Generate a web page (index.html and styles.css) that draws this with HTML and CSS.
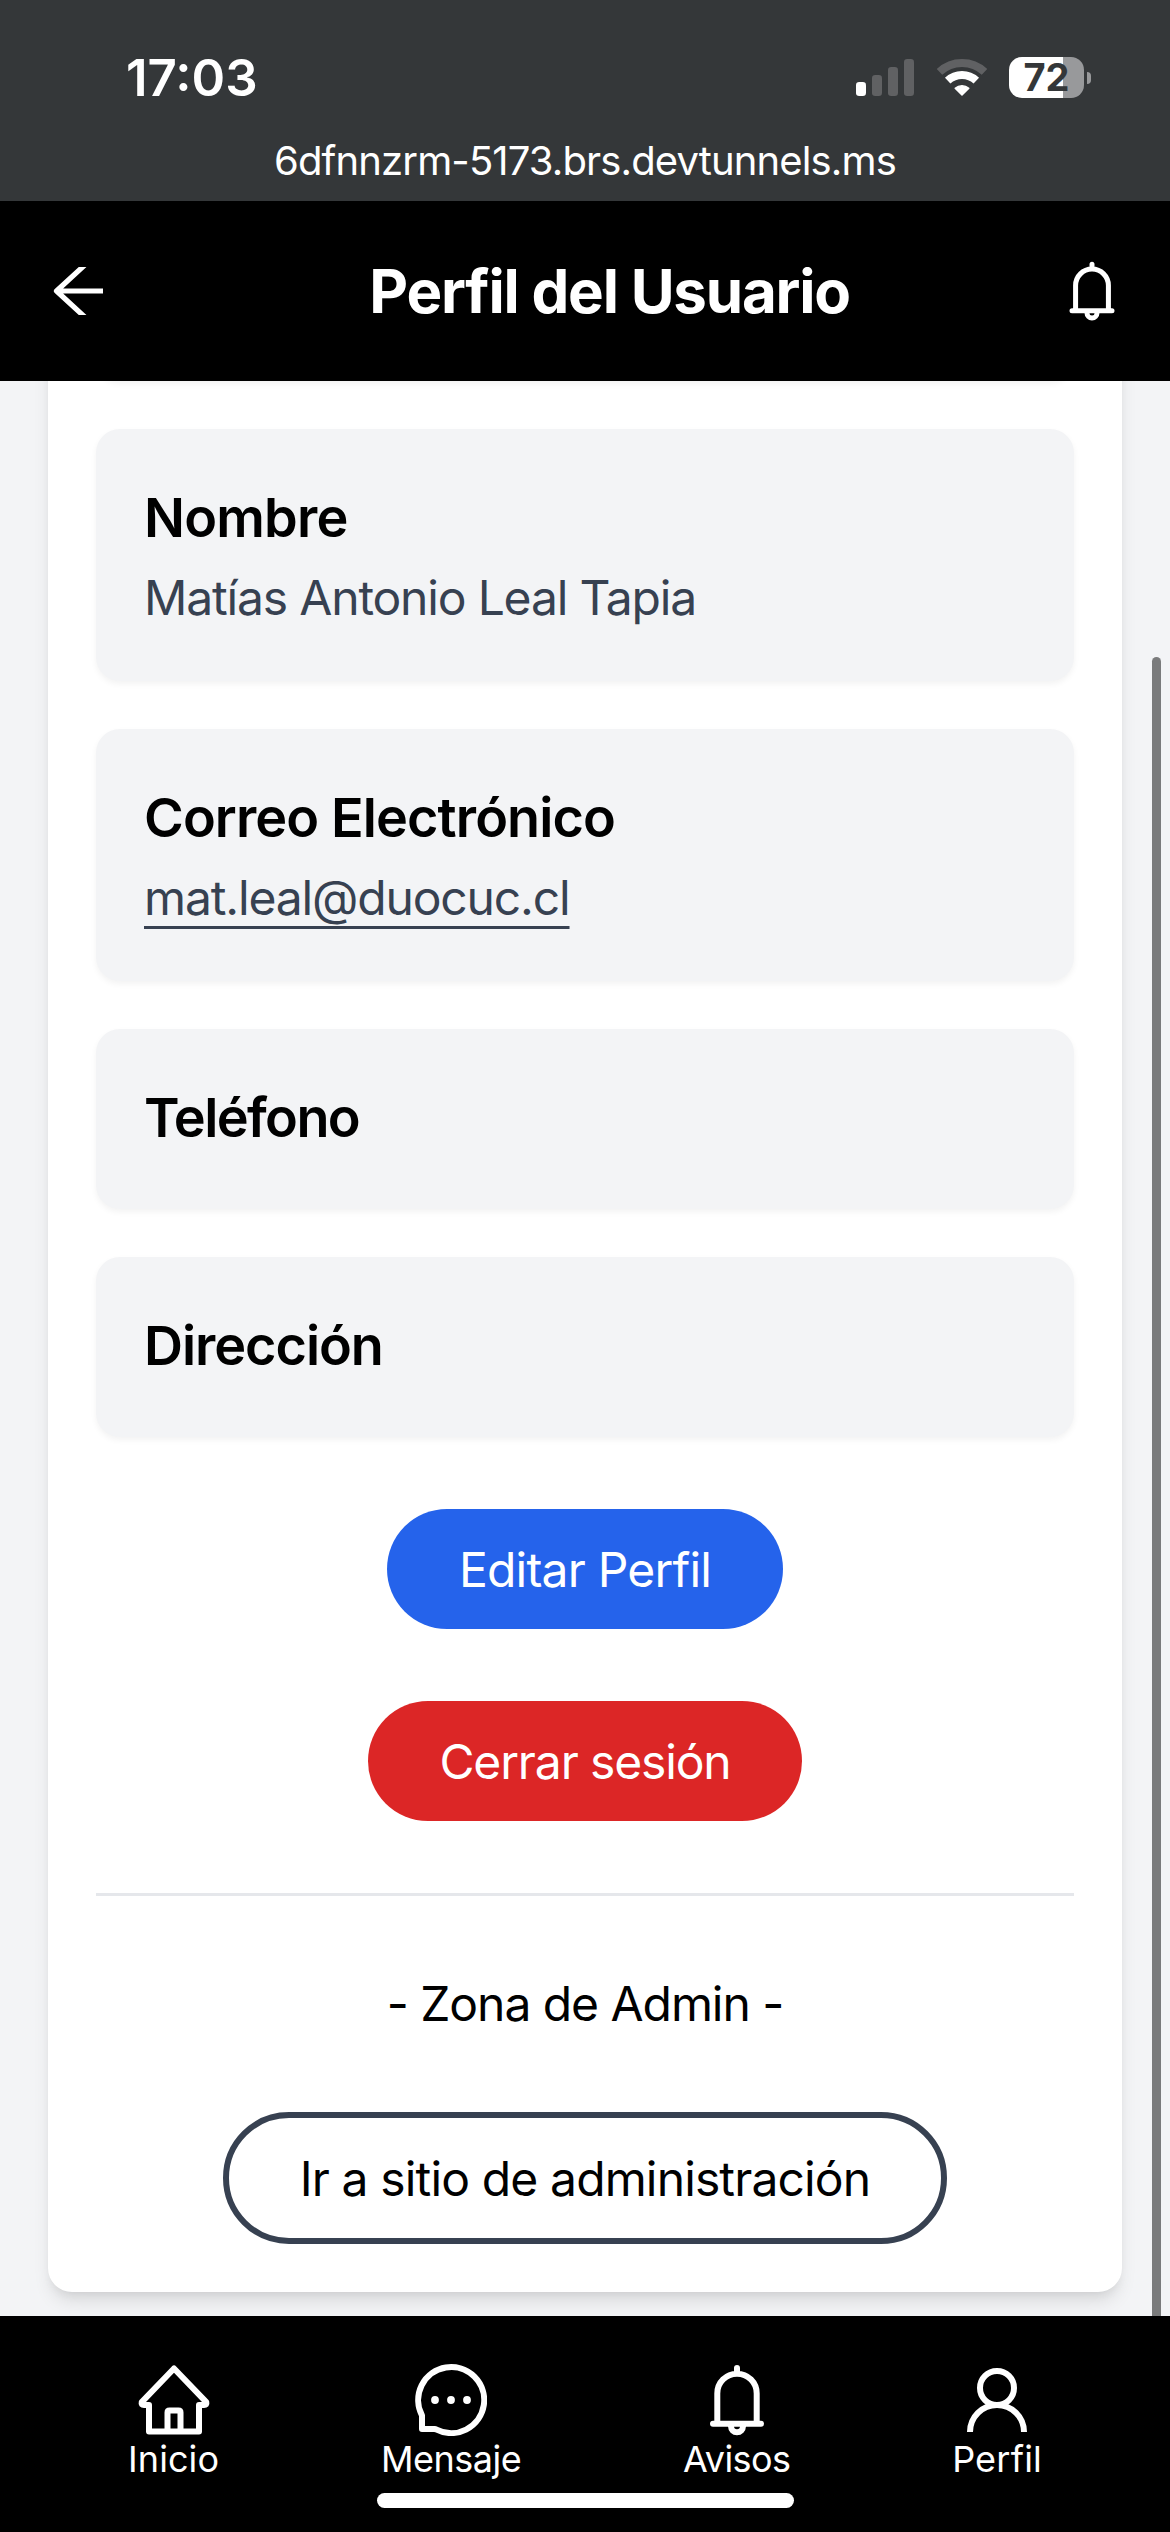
FILE: index.html
```
<!DOCTYPE html>
<html lang="es">
<head>
<meta charset="utf-8">
<title>Perfil del Usuario</title>
<link rel="stylesheet" href="styles.css">
</head>
<body>
<div class="status">
  <div class="status-row">
    <span class="clock">17:03</span>
    <div class="indicators">
      <svg width="58" height="41" viewBox="0 0 58 41">
        <rect x="0" y="25" width="10" height="14" rx="3.2" fill="#fff"/>
        <g fill="#606163">
          <rect x="16" y="18" width="10" height="21" rx="3.2"/>
          <rect x="32" y="10" width="10" height="29" rx="3.2"/>
          <rect x="48" y="2" width="10" height="37" rx="3.2"/>
        </g>
      </svg>
      <svg width="52" height="41" viewBox="0 0 52 41">
        <path d="M3.5 14.9A33 33 0 0 1 48.5 14.9" fill="none" stroke="#606163" stroke-width="8"/>
        <path d="M11.7 23.6A21 21 0 0 1 40.3 23.6" fill="none" stroke="#fff" stroke-width="8"/>
        <path d="M26 38L19.2 31.2A10.5 10.5 0 0 1 32.8 31.2Z" fill="#fff" stroke="#fff" stroke-width="1.5" stroke-linejoin="round"/>
      </svg>
      <div class="battery"><span class="battery-body">72</span><span class="battery-tip"></span></div>
    </div>
  </div>
  <div class="url">6dfnnzrm-5173.brs.devtunnels.ms</div>
</div>

<header class="header">
  <svg class="back" viewBox="0 6 60 48"><path d="M39.5 1.5L8.5 30L39.5 58.5M9 30H55"/></svg>
  <h1 class="title">Perfil del Usuario</h1>
  <svg class="bell" viewBox="0 0 72 72"><path d="M36 4V9M16.3 59V29.4a19.7 19.7 0 0 1 39.4 0V59M12 59.7H60M30 60v2.3a6 6 0 0 0 12 0V60"/></svg>
</header>

<main class="main">
  <section class="card">
    <div class="item item-photo"></div>
    <div class="item"><h2 class="label">Nombre</h2><p class="value name">Matías Antonio Leal Tapia</p></div>
    <div class="item"><h2 class="label wide">Correo Electrónico</h2><p class="value"><a class="mail">mat.leal@duocuc.cl</a></p></div>
    <div class="item"><h2 class="label phone">Teléfono</h2></div>
    <div class="item"><h2 class="label address">Dirección</h2></div>
    <div class="actions">
      <button class="btn edit">Editar Perfil</button>
      <button class="btn logout">Cerrar sesión</button>
    </div>
    <div class="admin">
      <p class="admin-title">- Zona de Admin -</p>
      <button class="btn admin-link">Ir a sitio de administración</button>
    </div>
  </section>
  <div class="scrollbar"></div>
</main>

<nav class="nav">
  <div class="tab">
    <svg viewBox="0 0 72 72"><path d="M36 4.5L3.7 38.2Q3 41 6 41H11V67.500H61V41H66Q69 41 68.3 38.2Z"/><path d="M29.5 67V48.5Q29.5 46.5 31.5 46.5H40.5Q42.5 46.5 42.5 48.5V67"/></svg>
    <span class="t-home">Inicio</span>
  </div>
  <div class="tab">
    <svg viewBox="0 0 72 72"><path d="M7 51.5A33 33 0 1 1 21 65.4L20 65H7Z"/><g class="dots"><circle cx="20" cy="36" r="3.9"/><circle cx="36" cy="36" r="3.9"/><circle cx="52" cy="36" r="3.9"/></g></svg>
    <span class="t-msg">Mensaje</span>
  </div>
  <div class="tab">
    <svg viewBox="0 0 72 72"><path d="M36 4V9M16.3 59V29.4a19.7 19.7 0 0 1 39.4 0V59M12 59.7H60M30 60v2.3a6 6 0 0 0 12 0V60"/></svg>
    <span class="t-alert">Avisos</span>
  </div>
  <div class="tab">
    <svg viewBox="0 0 72 72"><circle cx="36" cy="24" r="17"/><path class="butt" d="M9 68a27 27 0 0 1 54 0"/></svg>
    <span class="t-user">Perfil</span>
  </div>
  <div class="home-indicator"></div>
</nav>
</body>
</html>
```
FILE: styles.css
```
* { box-sizing: border-box; margin: 0; padding: 0; }

body {
  width: 1170px;
  height: 2532px;
  display: flex;
  flex-direction: column;
  overflow: hidden;
  background: #f3f4f6;
  color: #000;
  font-family: Inter, "Liberation Sans", sans-serif;
  font-size: 48px;
  line-height: 72px;
}

svg { display: block; flex: none; }

/* Status bar */
.status { height: 201px; padding-top: 47px; background: #343739; color: #fff; }
.status-row { height: 61px; padding: 0 79px 0 126px; display: flex; align-items: center; justify-content: space-between; }
.clock { font-size: 51px; font-weight: 600; letter-spacing: 0; line-height: 61px; }
.indicators { display: flex; align-items: center; gap: 21.5px; }
.battery { display: flex; align-items: center; gap: 3px; }
.battery-body {
  width: 75px; height: 41px; border-radius: 13px;
  background: linear-gradient(90deg, #fff 54px, #98999b 54px);
  color: #343739; font-size: 38px; font-weight: 700; line-height: 41px; text-align: center;
}
.battery-tip { width: 4px; height: 12px; border-radius: 0 4px 4px 0; background: #98999b; }
.url { margin-top: 29px; text-align: center; font-size: 40px; line-height: 48px; letter-spacing: -.86px; }

/* Page header */
.header {
  height: 180px; padding: 0 48px; background: #000; color: #fff; position: relative; z-index: 1;
  display: flex; align-items: center; justify-content: space-between;
}
.header svg { fill: none; stroke: #fff; stroke-linejoin: round; }
.back { width: 60px; height: 48px; stroke-width: 5.2; }
.bell { width: 60px; height: 60px; stroke-width: 6; stroke-linecap: round; }
.title { margin-left: 49px; margin-top: -1px; font-size: 60px; font-weight: 700; line-height: 84px; letter-spacing: -1.22px; }

/* Profile card */
.main { height: 1935px; padding: 0 48px; position: relative; overflow: hidden; }
.card {
  margin-top: -96px; height: 2007px; padding: 48px;
  display: flex; flex-direction: column; gap: 48px;
  background: #fff; border-radius: 24px;
  box-shadow: 0 12px 18px -3px rgba(0,0,0,.1), 0 6px 12px -6px rgba(0,0,0,.1);
}
.item { padding: 48px; background: #f3f4f6; border-radius: 24px; box-shadow: 0 3px 6px rgba(0,0,0,.05); }
.item-photo { height: 48px; padding: 0; flex: none; }
.label { font-size: 54px; font-weight: 600; line-height: 84px; margin-top: -1px; margin-bottom: 1px; letter-spacing: -.8px; }
.wide { letter-spacing: -.9px; }
.phone { letter-spacing: -1.6px; }
.address { letter-spacing: -1.05px; }
.value { margin-top: 2px; margin-bottom: -1px; color: #374151; letter-spacing: -1.15px; }
.name { letter-spacing: -1.17px; }
.mail { text-decoration: underline; text-decoration-thickness: 3px; text-underline-offset: 11px; text-decoration-skip-ink: none; }

.actions { padding: 24px 0; display: flex; flex-direction: column; align-items: center; gap: 72px; }
.btn {
  height: 120px; padding-top: 1px; border: 0; border-radius: 60px; color: #fff;
  font: 400 48px/72px Inter, "Liberation Sans", sans-serif; white-space: nowrap;
}
.edit { width: 396px; background: #2563eb; letter-spacing: -.8px; }
.logout { width: 434px; background: #dc2626; letter-spacing: -1.13px; }
.admin {
  border-top: 3px solid #e5e7eb; padding-top: 72px;
  display: flex; flex-direction: column; align-items: center; gap: 72px;
}
.admin-title { letter-spacing: -1.05px; }
.admin-link { width: 724px; height: 132px; border: 6px solid #374151; border-radius: 66px; background: #fff; color: #000; letter-spacing: -.86px; }

/* Scroll position marker, drawn over the page edge */
.scrollbar { position: absolute; right: 9px; top: 276px; width: 9px; height: 1680px; border-radius: 5px; background: #7a7b7c; }

/* Bottom navigation */
.nav {
  height: 216px; padding: 48px 128px 0; background: #000; color: #fff; position: relative;
  display: flex; justify-content: space-between; align-items: flex-start;
}
.tab { display: flex; flex-direction: column; align-items: center; font-size: 36px; line-height: 46px; }
.tab svg { width: 72px; height: 72px; fill: none; stroke: #fff; stroke-width: 6; stroke-linejoin: round; stroke-linecap: round; }
.tab .butt { stroke-linecap: butt; }
.tab .dots { fill: #fff; stroke: none; }
.t-home { letter-spacing: .1px; }
.t-msg { letter-spacing: -.5px; }
.t-alert { letter-spacing: -.6px; }
.t-user { letter-spacing: .2px; }
.home-indicator { position: absolute; left: 377px; bottom: 24px; width: 417px; height: 15px; border-radius: 8px; background: #fff; }
```
